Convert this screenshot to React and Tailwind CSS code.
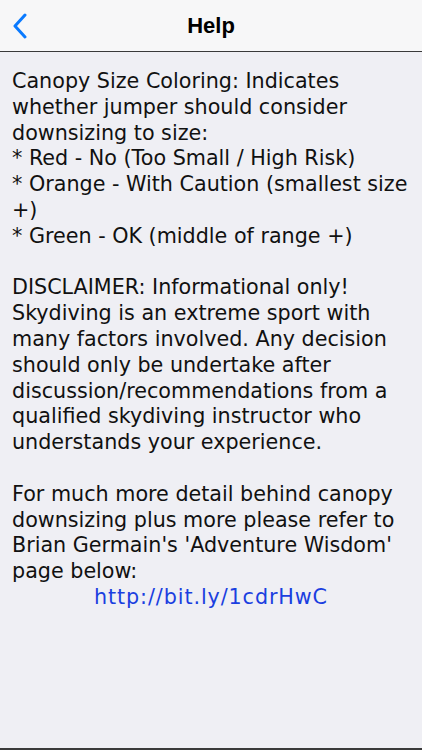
import React from 'react';

const lines = [
  'Canopy Size Coloring: Indicates',
  'whether jumper should consider',
  'downsizing to size:',
  '* Red - No (Too Small / High Risk)',
  '* Orange - With Caution (smallest size',
  '+)',
  '* Green - OK (middle of range +)',
  '',
  'DISCLAIMER: Informational only!',
  'Skydiving is an extreme sport with',
  'many factors involved. Any decision',
  'should only be undertake after',
  'discussion/recommendations from a',
  'qualified skydiving instructor who',
  'understands your experience.',
  '',
  'For much more detail behind canopy',
  'downsizing plus more please refer to',
  "Brian Germain's 'Adventure Wisdom'",
  'page below:',
];

export default function App() {
  return (
    <div className="w-[422px] h-[750px] flex flex-col bg-[#efeff4] overflow-hidden" style={{ fontFamily: '"DejaVu Sans", Verdana, sans-serif' }}>
      {/* nav bar */}
      <div className="relative h-[52px] shrink-0 bg-[#f7f7f8] border-b border-[#3a3a3a] flex items-center justify-center">
        <svg className="absolute left-[12px] top-[13px]" width="16" height="26" viewBox="0 0 16 26">
          <path d="M13 2 L3 13 L13 24" fill="none" stroke="#0a7aff" strokeWidth="3" strokeLinecap="round" strokeLinejoin="round" />
        </svg>
        <span className="text-[22px] font-bold text-black" style={{ fontFamily: '"Liberation Sans", Arial, sans-serif' }}>Help</span>
      </div>

      {/* help text */}
      <div className="flex-1 px-[12px] pt-[17px] text-[20.7px] leading-[25.8px] text-[#111]">
        {lines.map((l, i) => (
          <div key={i} className="whitespace-nowrap h-[25.8px]">{l}</div>
        ))}
        <div className="text-center text-[#1b3fe0] tracking-[0.9px]">http://bit.ly/1cdrHwC</div>
      </div>

      <div className="h-[2px] shrink-0 bg-[#3a3a3a]" />
    </div>
  );
}
